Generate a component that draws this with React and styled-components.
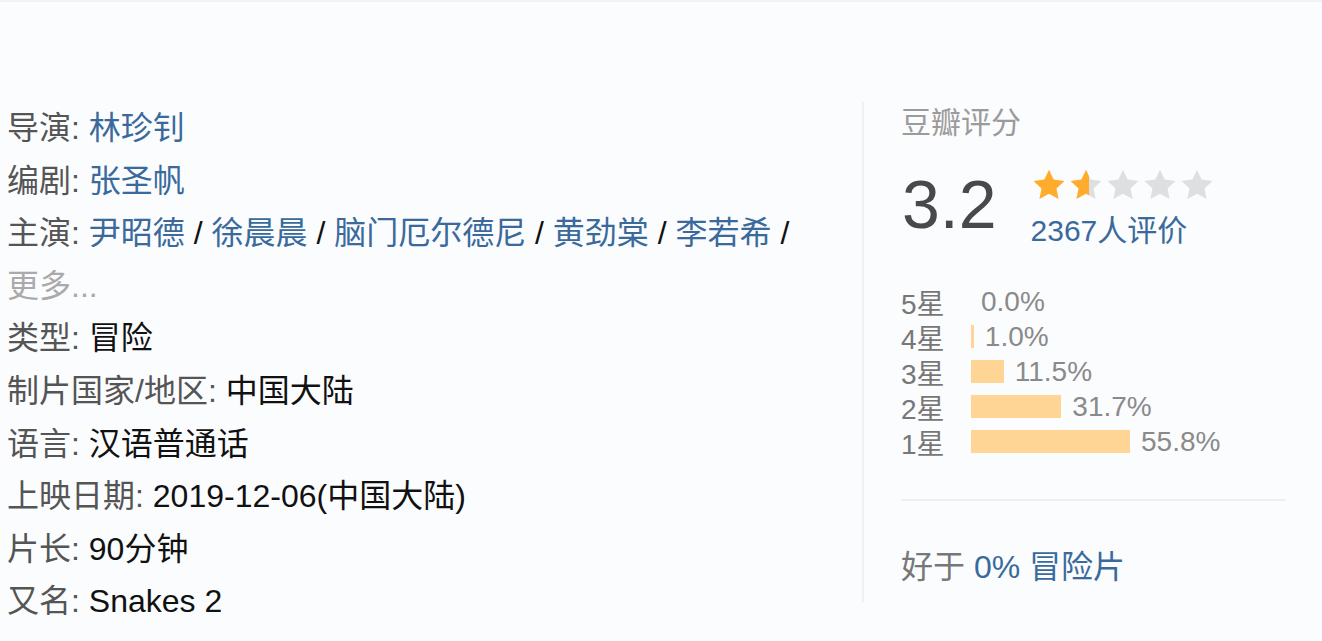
import React from 'react'
import styled, { createGlobalStyle } from 'styled-components'

const Global = createGlobalStyle`
  html, body {
    margin: 0;
    padding: 0;
    background: #fbfcfe;
    height: 641px;
    overflow: hidden;
  }
  body {
    font-family: "Liberation Sans", "Noto Sans CJK SC", sans-serif;
  }
`

const Page = styled.div`
  display: flex;
  align-items: flex-start;
  padding: 100px 0 0 7px;
  border-top: 2px solid #f1f2f4;
  height: 641px;
  box-sizing: border-box;
`

const Info = styled.div`
  width: 855px;
  font-size: 32px;
  line-height: 52.6px;
  color: #111;
`

const Row = styled.div`
  white-space: nowrap;
`

const Label = styled.span`
  color: #555;
`

const Link = styled.span`
  color: #3a6a9c;
`

const More = styled.span`
  color: #aaa;
`

const Side = styled.div`
  border-left: 2px solid #eef0f3;
  padding: 4px 0 0 37px;
  width: 386px;
  height: 496px;
`

const Title = styled.div`
  font-size: 30px;
  line-height: 34px;
  color: #9b9b9b;
`

const ScoreRow = styled.div`
  display: flex;
  align-items: flex-start;
  margin-top: 27px;
  gap: 34px;
`

const Score = styled.div`
  font-size: 68px;
  line-height: 72px;
  color: #494949;
  margin: 1px 0 0 1px;
`

const StarCol = styled.div`
  display: flex;
  flex-direction: column;
`

const Stars = styled.div`
  display: flex;
  gap: 1px;
`

const Votes = styled.div`
  font-size: 30px;
  line-height: 34px;
  color: #3a6a9c;
  margin-top: 11px;
`

const Dist = styled.div`
  margin-top: 36px;
  display: flex;
  flex-direction: column;
`

const DistRow = styled.div`
  display: flex;
  align-items: center;
  height: 35px;
`

const DistLabel = styled.span`
  width: 70px;
  font-size: 28px;
  color: #777;
`

const Bar = styled.span`
  display: inline-block;
  height: 23px;
  background: #ffd596;
  margin-right: ${(p) => (p.$empty ? '10px' : '11px')};
`

const Pct = styled.span`
  font-size: 28px;
  color: #8a8a8a;
`

const Rule = styled.div`
  margin-top: 40px;
  width: 385px;
  border-top: 2px solid #eeeff1;
`

const Better = styled.div`
  margin-top: 40px;
  font-size: 32px;
  color: #777;
`

const Star = ({ fill }) => {
  const id = `half-${fill}`
  return (
    <svg width="36" height="36" viewBox="0 0 24 24">
      <defs>
        <linearGradient id={id}>
          <stop offset={fill} stopColor="#ffac2d" />
          <stop offset={fill} stopColor="#dedfe1" />
        </linearGradient>
      </defs>
      <path
        d="M12 1.8l3.1 6.6 7.2.9-5.3 5 1.4 7.1L12 17.9l-6.4 3.5 1.4-7.1-5.3-5 7.2-.9z"
        fill={`url(#${id})`}
      />
    </svg>
  )
}

const dist = [
  ['5星', 0, '0.0%'],
  ['4星', 1.0, '1.0%'],
  ['3星', 11.5, '11.5%'],
  ['2星', 31.7, '31.7%'],
  ['1星', 55.8, '55.8%'],
]

const cast = ['尹昭德', '徐晨晨', '脑门厄尔德尼', '黄劲棠', '李若希']

export default function App() {
  return (
    <>
      <Global />
      <Page>
        <Info>
          <Row><Label>导演: </Label><Link>林珍钊</Link></Row>
          <Row><Label>编剧: </Label><Link>张圣帆</Link></Row>
          <Row>
            <Label>主演: </Label>
            {cast.map((c) => (
              <React.Fragment key={c}><Link>{c}</Link> / </React.Fragment>
            ))}
          </Row>
          <Row><More>更多...</More></Row>
          <Row><Label>类型: </Label>冒险</Row>
          <Row><Label>制片国家/地区: </Label>中国大陆</Row>
          <Row><Label>语言: </Label>汉语普通话</Row>
          <Row><Label>上映日期: </Label>2019-12-06(中国大陆)</Row>
          <Row><Label>片长: </Label>90分钟</Row>
          <Row><Label>又名: </Label>Snakes 2</Row>
          <Row><Label>IMDb: </Label>tt11520284</Row>
        </Info>
        <Side>
          <Title>豆瓣评分</Title>
          <ScoreRow>
            <Score>3.2</Score>
            <StarCol>
              <Stars>
                <Star fill="1" />
                <Star fill="0.6" />
                <Star fill="0" />
                <Star fill="0" />
                <Star fill="0" />
              </Stars>
              <Votes>2367人评价</Votes>
            </StarCol>
          </ScoreRow>
          <Dist>
            {dist.map(([l, v, t]) => (
              <DistRow key={l}>
                <DistLabel>{l}</DistLabel>
                <Bar $empty={v === 0} style={{ width: `${v * 2.85}px` }} />
                <Pct>{t}</Pct>
              </DistRow>
            ))}
          </Dist>
          <Rule />
          <Better>好于 <Link>0% 冒险片</Link></Better>
        </Side>
      </Page>
    </>
  )
}
